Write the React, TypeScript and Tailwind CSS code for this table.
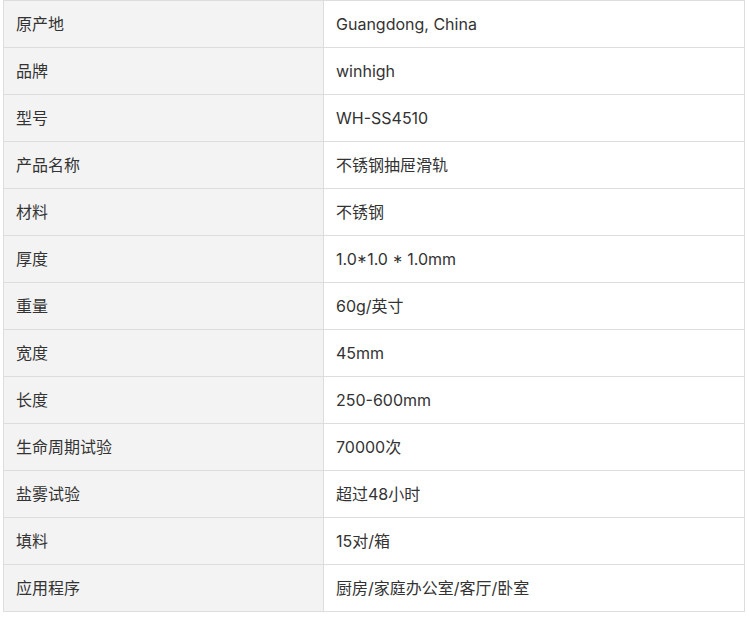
import React from 'react';

const specs: [string, string][] = [
  ['原产地', 'Guangdong, China'],
  ['品牌', 'winhigh'],
  ['型号', 'WH-SS4510'],
  ['产品名称', '不锈钢抽屉滑轨'],
  ['材料', '不锈钢'],
  ['厚度', '1.0*1.0 * 1.0mm'],
  ['重量', '60g/英寸'],
  ['宽度', '45mm'],
  ['长度', '250-600mm'],
  ['生命周期试验', '70000次'],
  ['盐雾试验', '超过48小时'],
  ['填料', '15对/箱'],
  ['应用程序', '厨房/家庭办公室/客厅/卧室'],
];

export default function App() {
  return (
    <div className="w-[749px] h-[617px] bg-white pl-[3px] pr-[4px]">
      <table
        className="w-full border-collapse text-[16px] text-[#333]"
        style={{ fontFamily: 'Inter, "Noto Sans CJK SC", sans-serif' }}
      >
        <tbody>
          {specs.map(([k, v]) => (
            <tr key={k} className="h-[47px]">
              <td className="w-[320px] border border-[#dddddd] bg-[#f3f3f3] px-3 py-0 align-middle">
                {k}
              </td>
              <td className="border border-[#dddddd] bg-white px-3 py-0 align-middle">
                {v}
              </td>
            </tr>
          ))}
        </tbody>
      </table>
    </div>
  );
}
